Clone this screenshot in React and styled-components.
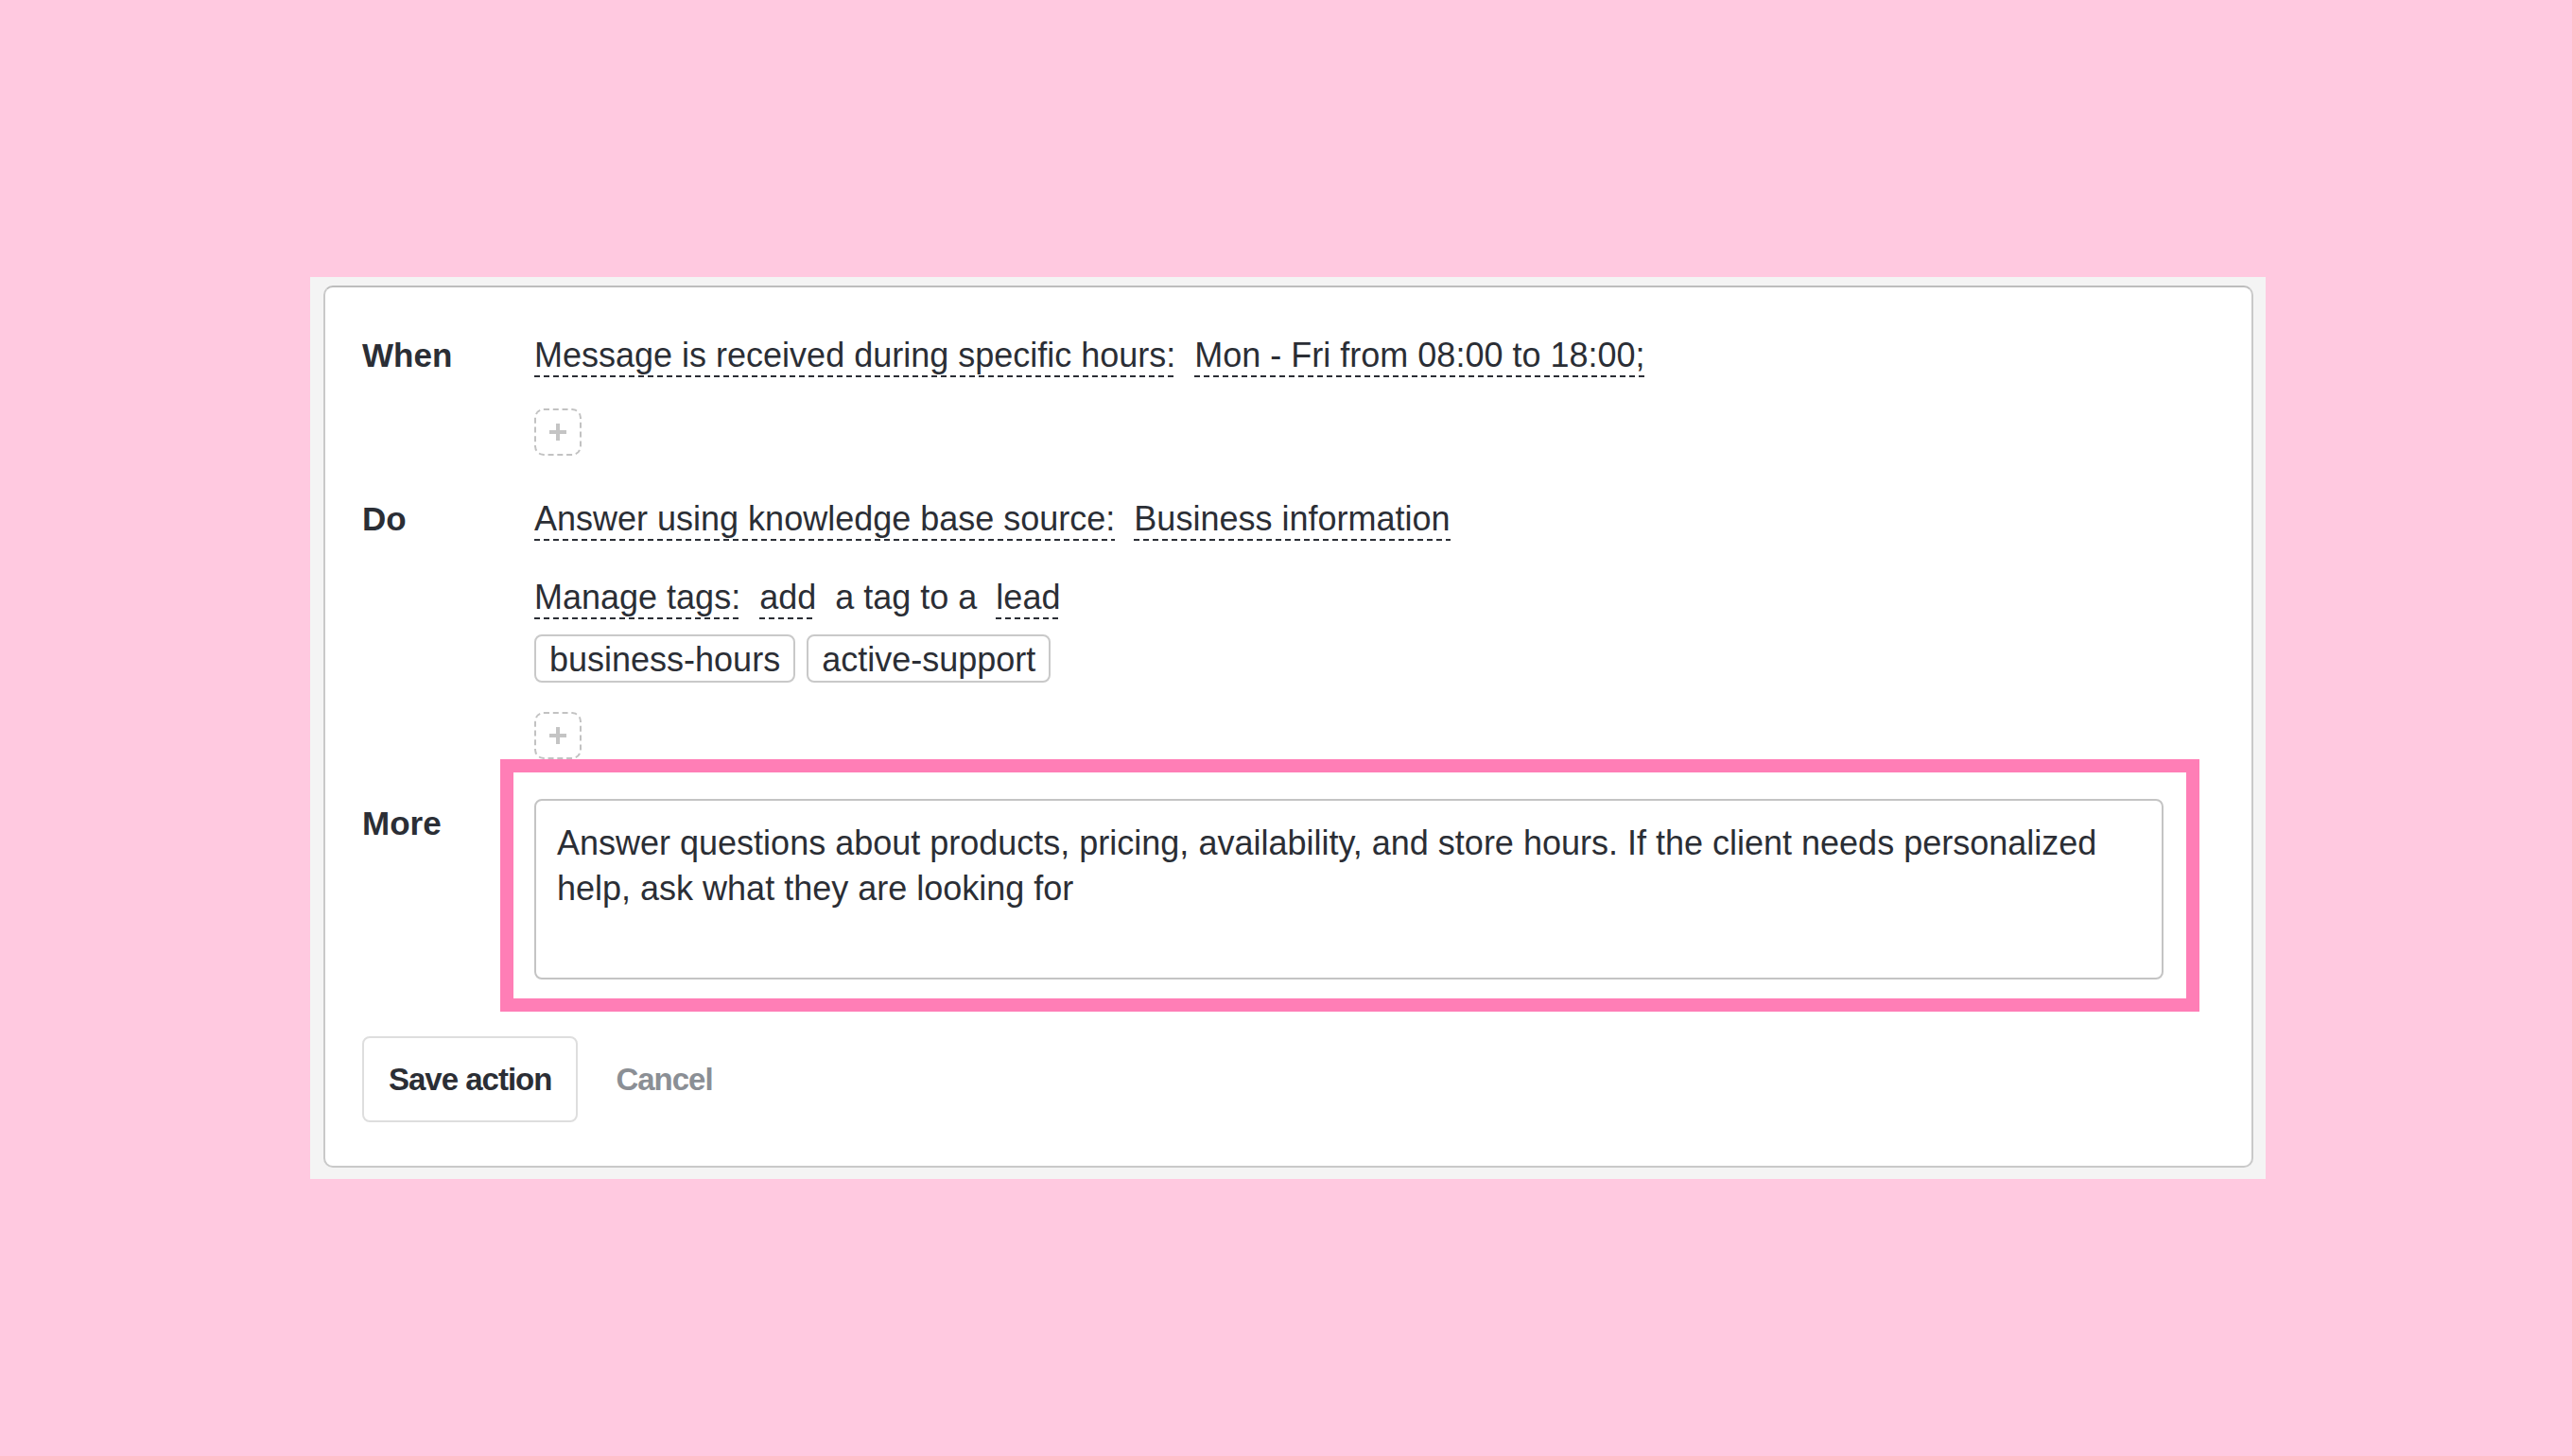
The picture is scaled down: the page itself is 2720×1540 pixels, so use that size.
import { createGlobalStyle, styled } from "styled-components";

const GlobalStyle = createGlobalStyle`
  html, body {
    margin: 0;
    padding: 0;
    background: #ffc9e0;
  }
  body {
    font-family: "Liberation Sans", Arial, sans-serif;
    color: #2b2e35;
  }
`;

const Page = styled.div`
  min-height: 1540px;
  padding: 293px 0 0 328px;
  box-sizing: border-box;
`;

const Panel = styled.div`
  width: 2068px;
  box-sizing: border-box;
  background: #f4f4f4;
  padding: 9px 13px 12px 14px;
`;

const Card = styled.div`
  background: #ffffff;
  border: 2px solid #c9c9c9;
  border-top-color: #bdbdbd;
  border-radius: 10px;
  padding: 47px 93px 46px 39px;
`;

const RuleGrid = styled.div`
  display: grid;
  grid-template-columns: 182px 1fr;
  font-size: 36px;
  line-height: 48px;
`;

const Label = styled.div`
  font-size: 35px;
  font-weight: 700;
  padding-top: ${(p) => p.$offset || 0}px;
`;

const Column = styled.div`
  display: flex;
  flex-direction: column;
  align-items: flex-start;
  padding-bottom: ${(p) => p.$after || 0}px;
`;

const Line = styled.div`
  display: flex;
  align-items: flex-end;
  gap: 20px;
  white-space: nowrap;
  margin-bottom: ${(p) => p.$after || 0}px;
`;

const Phrase = styled.span`
  display: inline-block;
  padding: 3px 0 2px;
  line-height: 43px;
  background-image: ${(p) =>
    p.$choice
      ? "repeating-linear-gradient(to right, #2b2e35 0 6px, transparent 6px 10px)"
      : "none"};
  background-size: 100% 2px;
  background-position: left bottom;
  background-repeat: no-repeat;
`;

const TagList = styled.div`
  display: flex;
  gap: 12px;
  margin-bottom: ${(p) => p.$after || 0}px;
`;

const Tag = styled.span`
  display: inline-flex;
  align-items: center;
  height: 51px;
  box-sizing: border-box;
  padding: 2px 14px 0;
  border: 2px solid #c9c9c9;
  border-radius: 8px;
`;

const AddButton = styled.button`
  width: 50px;
  height: 50px;
  padding: 0;
  display: flex;
  align-items: center;
  justify-content: center;
  background: #fff;
  border: 2px dashed #c2c2c2;
  border-radius: 10px;
  cursor: pointer;
`;

const Highlighted = styled.div`
  position: relative;
  width: 100%;

  &::after {
    content: "";
    position: absolute;
    top: -42px;
    left: -36px;
    right: -38px;
    bottom: -34px;
    border: 14px solid #ff7eb6;
    pointer-events: none;
  }
`;

const Notes = styled.textarea`
  display: block;
  width: 100%;
  height: 191px;
  box-sizing: border-box;
  resize: none;
  padding: 21px 22px 19px;
  border: 2px solid #c4c4c4;
  border-radius: 8px;
  font: inherit;
  font-size: 36px;
  line-height: 48px;
  color: #2b2e35;
  outline: none;
`;

const Actions = styled.div`
  display: flex;
  align-items: center;
  gap: 40px;
  margin-top: 60px;
`;

const SaveButton = styled.button`
  height: 91px;
  padding: 0 26px;
  background: #fff;
  border: 2px solid #dedede;
  border-radius: 8px;
  font-family: inherit;
  font-size: 33px;
  letter-spacing: -1px;
  font-weight: 700;
  color: #2b2e35;
  cursor: pointer;
`;

const CancelButton = styled.button`
  padding: 0;
  background: none;
  border: none;
  font-family: inherit;
  font-size: 33px;
  letter-spacing: -1px;
  font-weight: 700;
  color: #8b8f95;
  cursor: pointer;
`;

const PlusIcon = () => (
  <svg width="22" height="22" viewBox="0 0 22 22">
    <path d="M11 2v18M2 11h18" stroke="#c4c4c4" strokeWidth="4" />
  </svg>
);

export default function App() {
  return (
    <>
      <GlobalStyle />
      <Page>
        <Panel>
          <Card>
            <RuleGrid>
              <Label $offset={1}>When</Label>
              <Column $after={42}>
                <Line $after={33}>
                  <Phrase $choice>Message is received during specific hours:</Phrase>
                  <Phrase $choice>Mon - Fri from 08:00 to 18:00;</Phrase>
                </Line>
                <AddButton aria-label="Add condition">
                  <PlusIcon />
                </AddButton>
              </Column>

              <Label $offset={1}>Do</Label>
              <Column $after={42}>
                <Line $after={35}>
                  <Phrase $choice>Answer using knowledge base source:</Phrase>
                  <Phrase $choice>Business information</Phrase>
                </Line>
                <Line $after={16}>
                  <Phrase $choice>Manage tags:</Phrase>
                  <Phrase $choice>add</Phrase>
                  <Phrase>a tag to a</Phrase>
                  <Phrase $choice>lead</Phrase>
                </Line>
                <TagList $after={31}>
                  <Tag>business-hours</Tag>
                  <Tag>active-support</Tag>
                </TagList>
                <AddButton aria-label="Add action">
                  <PlusIcon />
                </AddButton>
              </Column>

              <Label $offset={2}>More</Label>
              <Column>
                <Highlighted>
                  <Notes
                    defaultValue="Answer questions about products, pricing, availability, and store hours. If the client needs personalized help, ask what they are looking for"
                  />
                </Highlighted>
              </Column>
            </RuleGrid>
            <Actions>
              <SaveButton>Save action</SaveButton>
              <CancelButton>Cancel</CancelButton>
            </Actions>
          </Card>
        </Panel>
      </Page>
    </>
  );
}
